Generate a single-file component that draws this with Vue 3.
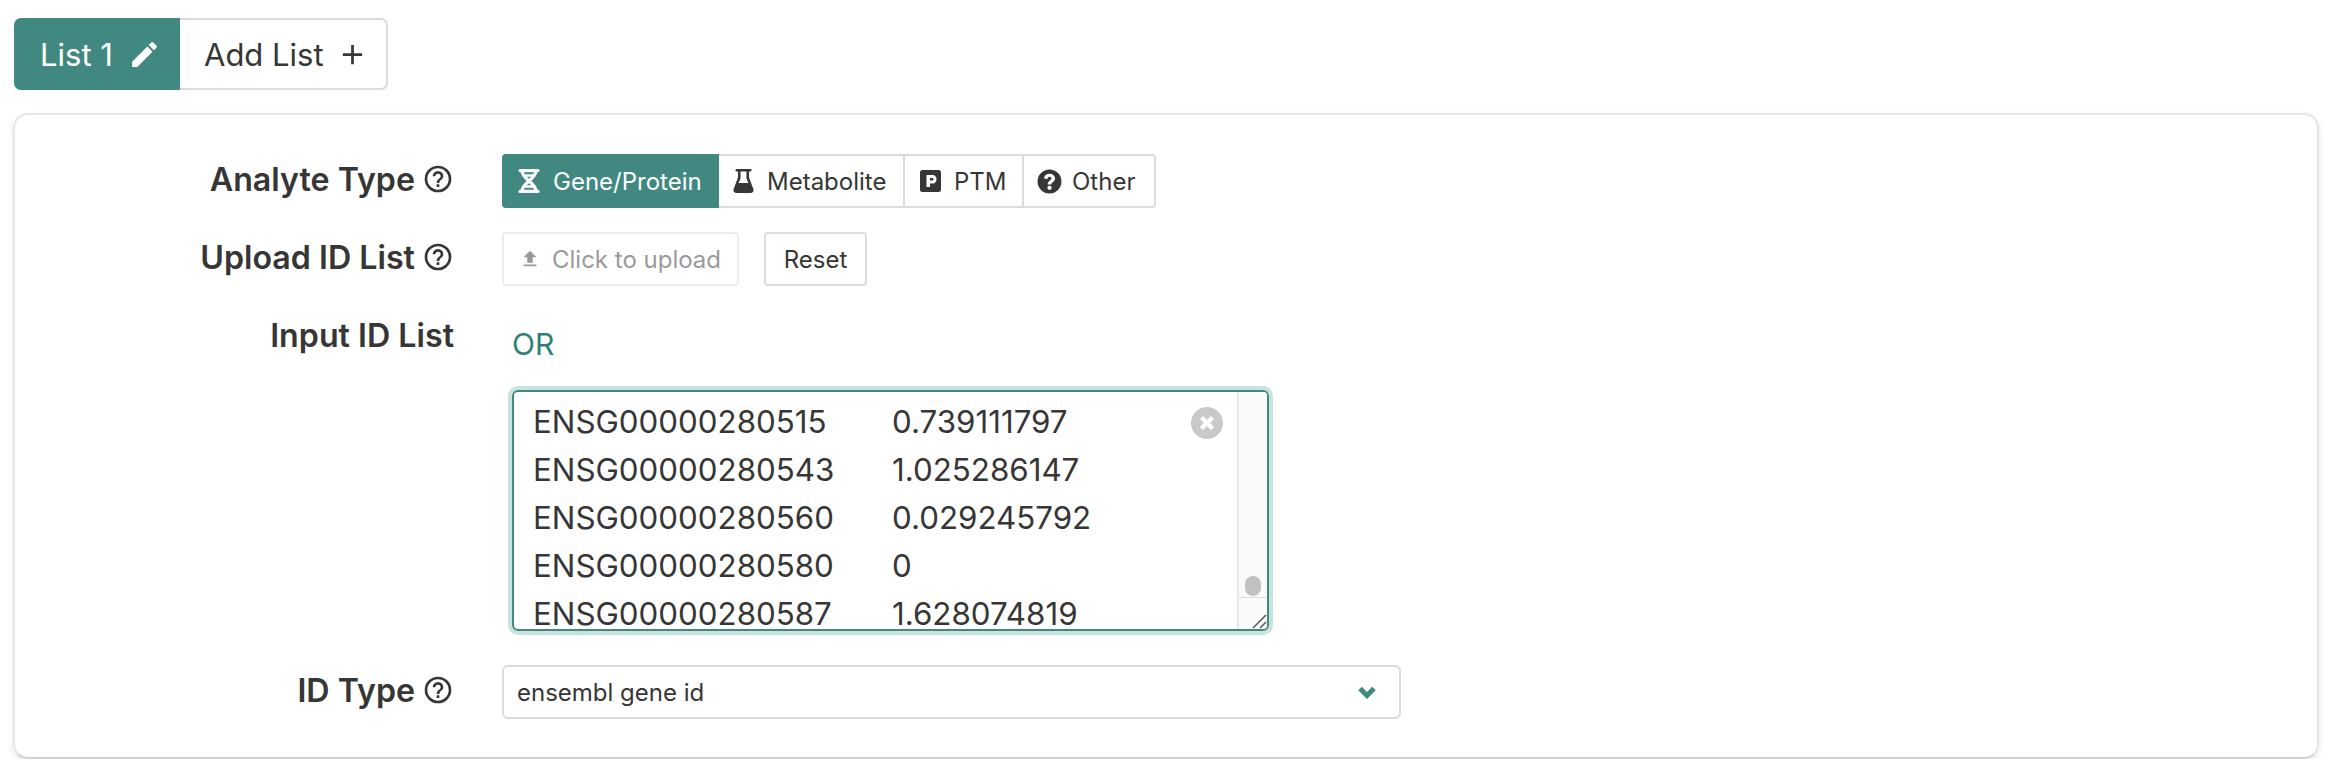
<template>
  <div class="page">
    <div class="tabs">
      <button class="tab active">
        List 1
        <svg class="tab-icon" viewBox="0 0 24 24"><path :d="icons.pencil" /></svg>
      </button>
      <button class="tab">
        Add List
        <svg class="tab-icon" viewBox="0 0 24 24"><path :d="icons.plus" /></svg>
      </button>
    </div>

    <div class="card">
      <div class="row">
        <div class="label">
          <span>Analyte Type</span>
          <svg class="help" viewBox="0 0 24 24"><path :d="icons.help" /></svg>
        </div>
        <div class="types">
          <button class="type type-gene active">
            <svg class="dna" viewBox="0 0 22 24" fill="none" stroke="currentColor" stroke-width="3.2">
              <path d="M2 1.600H20M2 22.400H20" stroke-linecap="round" />
              <path d="M4 2C4 10 18 14 18 22M18 2C18 10 4 14 4 22" />
              <path d="M6 6.500H16M6 17.500H16" stroke-width="2.400" />
            </svg>
            Gene/Protein
          </button>
          <button class="type type-metabolite">
            <svg class="flask" viewBox="0 0 19 24" preserveAspectRatio="none">
              <path d="M3.500 0H15.500A1.300 1.300 0 0 1 15.500 2.600H14.500V8.500L18.400 20C19.200 22.200 17.800 24 15.800 24H3.200C1.200 24 -.2 22.200 .6 20L4.500 8.500V2.600H3.500A1.300 1.300 0 0 1 3.500 0ZM6.800 2.600V9.500L5 14H14L12.200 9.500V2.600Z" fill-rule="evenodd" />
            </svg>
            Metabolite
          </button>
          <button class="type type-ptm">
            <svg class="parking" viewBox="0 0 21 22">
              <path d="M2.500 0H18.500A2.500 2.500 0 0 1 21 2.500V19.500A2.500 2.500 0 0 1 18.500 22H2.500A2.500 2.500 0 0 1 0 19.500V2.500A2.500 2.500 0 0 1 2.500 0ZM6.500 5V17H10V13.500H12.500C15.200 13.500 16.500 11.700 16.500 9.200S15.200 5 12.500 5ZM10 8H12C13 8 13.500 8.400 13.500 9.200S13 10.500 12 10.500H10Z" fill-rule="evenodd" />
            </svg>
            PTM
          </button>
          <button class="type type-other">
            <svg class="question" viewBox="0 0 24 24">
              <path d="M12 .5A11.500 11.500 0 1 1 12 23.500A11.500 11.500 0 0 1 12 .5ZM12 4.500C9 4.500 7 6.300 6.700 9.200L10 9.600C10.200 8.300 10.800 7.500 12 7.500C13.100 7.500 13.900 8.200 13.900 9.100C13.900 10.800 10.300 11.200 10.300 14.800H13.600C13.600 12.800 17.300 12.200 17.300 9C17.300 6.300 14.900 4.500 12 4.500ZM12 16C10.800 16 10 16.900 10 18S10.800 20 12 20S14 19.100 14 18S13.200 16 12 16Z" fill-rule="evenodd" />
            </svg>
            Other
          </button>
        </div>
      </div>

      <div class="row">
        <div class="label">
          <span>Upload ID List</span>
          <svg class="help" viewBox="0 0 24 24"><path :d="icons.help" /></svg>
        </div>
        <div class="upload-group">
          <button class="upload">
            <svg class="upload-icon" viewBox="0 0 24 24"><path :d="icons.upload" /></svg>
            Click to upload
          </button>
          <button class="reset">Reset</button>
        </div>
      </div>

      <div class="row input-row">
        <div class="label"><span>Input ID List</span></div>
        <div class="input-col">
          <p class="or">OR</p>
          <div class="id-box">
            <div class="id-lines">
              <div v-for="line in idLines" :key="line.id" class="id-line">
                <span class="id-name">{{ line.id }}</span>
                <span>{{ line.value }}</span>
              </div>
              <svg class="clear" viewBox="0 0 32 32">
                <circle cx="16" cy="16" r="16" fill="#c9c9c9" />
                <path d="M10.500 10.500L21.500 21.500M21.500 10.500L10.500 21.500" stroke="#fff" stroke-width="4.500" />
              </svg>
            </div>
            <div class="scrollbar">
              <div class="track"><div class="thumb"></div></div>
              <div class="corner">
                <svg viewBox="0 0 16 16" width="16" height="16" fill="none" stroke="#555" stroke-width="1.5">
                  <path d="M2 15L15 2M9 15L15 9" />
                </svg>
              </div>
            </div>
          </div>
        </div>
      </div>

      <div class="row">
        <div class="label">
          <span>ID Type</span>
          <svg class="help" viewBox="0 0 24 24"><path :d="icons.help" /></svg>
        </div>
        <div class="select">
          <span>ensembl gene id</span>
          <svg class="chevron" viewBox="0 0 18 13" fill="none" stroke="#418980" stroke-width="5">
            <path d="M2 2.500L9 9.500L16 2.500" />
          </svg>
        </div>
      </div>
    </div>
  </div>
</template>

<script setup>
const icons = {
  pencil: 'M20.71,7.04C21.1,6.65 21.1,6 20.71,5.63L18.37,3.29C18,2.9 17.35,2.9 16.96,3.29L15.12,5.12L18.87,8.87M3,17.25V21H6.75L17.81,9.93L14.06,6.18L3,17.25Z',
  plus: 'M19,13H13V19H11V13H5V11H11V5H13V11H19V13Z',
  help: 'M11,18H13V16H11V18M12,2A10,10 0 0,0 2,12A10,10 0 0,0 12,22A10,10 0 0,0 22,12A10,10 0 0,0 12,2M12,20C7.59,20 4,16.41 4,12C4,7.59 7.59,4 12,4C16.41,4 20,7.59 20,12C20,16.41 16.41,20 12,20M12,6A4,4 0 0,0 8,10H10A2,2 0 0,1 12,8A2,2 0 0,1 14,10C14,12 11,11.75 11,15H13C13,12.75 16,12.5 16,10A4,4 0 0,0 12,6Z',
  upload: 'M9,16V10H5L12,3L19,10H15V16H9M5,20V18H19V20H5Z'
}

const idLines = [
  { id: 'ENSG00000280515', value: '0.739111797' },
  { id: 'ENSG00000280543', value: '1.025286147' },
  { id: 'ENSG00000280560', value: '0.029245792' },
  { id: 'ENSG00000280580', value: '0' },
  { id: 'ENSG00000280587', value: '1.628074819' }
]
</script>

<style>
body {
  background: #fff;
}
</style>

<style scoped>
.page {
  font-family: Inter, "Liberation Sans", sans-serif;
  color: #363636;
  padding: 18px 19px 0 14px;
}

button {
  font-family: inherit;
  color: inherit;
  background: #fff;
  cursor: pointer;
  white-space: nowrap;
}

.tabs {
  display: flex;
}

.tab {
  height: 72px;
  display: flex;
  align-items: center;
  gap: 12px;
  font-size: 31px;
  padding: 0 17px 0 24px;
  border: 2px solid #dbdbdb;
  border-left: none;
  border-radius: 0 7px 7px 0;
}

.tab.active {
  background: #418980;
  border: none;
  border-radius: 7px 0 0 7px;
  color: #fff;
  padding: 0 0 0 26px;
  gap: 15px;
  width: 166px;
}

.tab-icon {
  width: 33px;
  height: 33px;
  fill: currentColor;
}

.card {
  margin-top: 23px;
  margin-left: -1px;
  height: 646px;
  box-sizing: border-box;
  border: 2px solid #e6e6e6;
  border-bottom-color: #d0d0d0;
  border-radius: 15px;
  box-shadow: 0 3px 6px rgba(0, 0, 0, 0.1);
  padding: 39px 0 0;
}

.row {
  display: flex;
  margin-bottom: 24px;
}

.label {
  width: 439px;
  margin-right: 48px;
  flex: none;
  display: flex;
  justify-content: flex-end;
  align-items: center;
  gap: 7px;
  font-size: 32.2px;
  font-weight: 600;
  height: 50px;
}

.help {
  width: 32px;
  height: 32px;
  fill: currentColor;
  flex: none;
}

.types {
  display: flex;
}

.type {
  height: 54px;
  display: flex;
  align-items: center;
  font-size: 24px;
  padding: 0;
  border: 2px solid #dbdbdb;
  border-left-width: 0;
}

.type svg {
  fill: currentColor;
  flex: none;
}

.type.active {
  background: #418980;
  color: #fff;
  border: none;
  border-radius: 4px 0 0 4px;
}

.type-gene {
  width: 217px;
  gap: 13px;
  padding-left: 16px;
}

.type-metabolite {
  width: 186px;
  gap: 13px;
  padding-left: 14px;
}

.type-ptm {
  width: 119px;
  gap: 13px;
  padding-left: 15px;
}

.type-other {
  width: 132px;
  gap: 10px;
  padding-left: 13px;
  border-radius: 0 4px 4px 0;
}

.type svg.dna {
  width: 22px;
  height: 24px;
  fill: none;
}

.flask {
  width: 21px;
  height: 24px;
}

.parking {
  width: 21px;
  height: 22px;
}

.question {
  width: 25px;
  height: 25px;
}

.upload-group {
  display: flex;
  gap: 25px;
}

.upload {
  height: 54px;
  width: 237px;
  display: flex;
  align-items: center;
  gap: 11px;
  font-size: 24px;
  padding: 0 0 0 15px;
  color: #9a9a9a;
  border: 2px solid #ededed;
  border-radius: 4px;
}

.upload-icon {
  width: 22px;
  height: 22px;
  fill: currentColor;
}

.reset {
  height: 54px;
  width: 103px;
  font-size: 24px;
  border: 2px solid #dbdbdb;
  border-radius: 4px;
}

.input-row {
  margin-bottom: 34px;
}

.input-col {
  margin-left: 10px;
}

.or {
  margin: 0;
  font-size: 30px;
  color: #2f8079;
  height: 80px;
  padding-top: 16px;
  box-sizing: border-box;
}

.id-box {
  width: 757px;
  height: 241px;
  box-sizing: border-box;
  display: flex;
  border: 2px solid #418980;
  border-radius: 6px;
  box-shadow: 0 0 0 4px #c8e2df;
  overflow: hidden;
}

.id-lines {
  position: relative;
  flex: 1;
  padding: 6px 19px 0;
  overflow: hidden;
  font-size: 31.3px;
}

.id-line {
  display: flex;
  height: 48px;
  line-height: 48px;
}

.id-name {
  width: 359px;
}

.clear {
  position: absolute;
  top: 15px;
  right: 14px;
  width: 32px;
  height: 32px;
}

.scrollbar {
  width: 28px;
  flex: none;
  display: flex;
  flex-direction: column;
  background: #fafafa;
  border-left: 2px solid #e8e8e8;
}

.track {
  flex: 1;
  display: flex;
  justify-content: center;
  align-items: flex-end;
}

.thumb {
  width: 16px;
  height: 20px;
  border-radius: 8px;
  background: #c1c1c1;
  margin-bottom: 1px;
}

.corner {
  height: 31px;
  border-top: 1px solid #dcdcdc;
  display: flex;
  justify-content: flex-end;
  align-items: flex-end;
}

.select {
  width: 899px;
  height: 54px;
  box-sizing: border-box;
  display: flex;
  align-items: center;
  justify-content: space-between;
  padding: 0 23px 0 13px;
  font-size: 24px;
  border: 2px solid #dbdbdb;
  border-radius: 6px;
}

.chevron {
  width: 18px;
  height: 13px;
}
</style>
